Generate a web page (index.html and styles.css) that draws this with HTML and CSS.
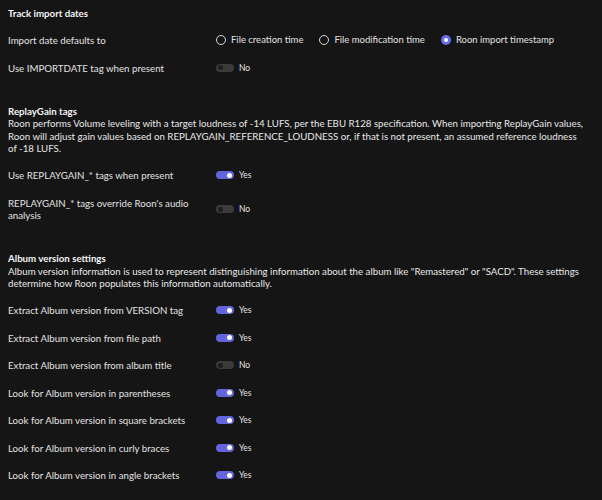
FILE: index.html
```html
<!DOCTYPE html>
<html lang="en">
<head>
    <meta charset="UTF-8">
    <meta name="viewport" content="width=device-width, initial-scale=1.0">
    <title>Import Settings</title>
    <link rel="stylesheet" href="styles.css">
</head>
<body>
    <div class="settings">
        <section class="group">
            <h2 class="group__title">Track import dates</h2>
            <div class="rows">
                <div class="row">
                    <div class="row__label">Import date defaults to</div>
                    <div class="row__control radios">
                        <label class="radio"><span class="radio__dot"></span>File creation time</label>
                        <label class="radio"><span class="radio__dot"></span>File modification time</label>
                        <label class="radio radio--on"><span class="radio__dot"></span>Roon import timestamp</label>
                    </div>
                </div>
                <div class="row">
                    <div class="row__label">Use IMPORTDATE tag when present</div>
                    <div class="row__control"><span class="toggle"></span>No</div>
                </div>
            </div>
        </section>

        <section class="group">
            <h2 class="group__title">ReplayGain tags</h2>
            <p class="group__desc">Roon performs Volume leveling with a target loudness of -14 LUFS, per the EBU R128 specification. When importing ReplayGain values, Roon will adjust gain values based on REPLAYGAIN_REFERENCE_LOUDNESS or, if that is not present, an assumed reference loudness of -18 LUFS.</p>
            <div class="rows">
                <div class="row">
                    <div class="row__label">Use REPLAYGAIN_* tags when present</div>
                    <div class="row__control"><span class="toggle toggle--on"></span>Yes</div>
                </div>
                <div class="row">
                    <div class="row__label">REPLAYGAIN_* tags override Roon's audio analysis</div>
                    <div class="row__control"><span class="toggle"></span>No</div>
                </div>
            </div>
        </section>

        <section class="group">
            <h2 class="group__title">Album version settings</h2>
            <p class="group__desc">Album version information is used to represent distinguishing information about the album like "Remastered" or "SACD". These settings determine how Roon populates this information automatically.</p>
            <div class="rows">
                <div class="row">
                    <div class="row__label">Extract Album version from VERSION tag</div>
                    <div class="row__control"><span class="toggle toggle--on"></span>Yes</div>
                </div>
                <div class="row">
                    <div class="row__label">Extract Album version from file path</div>
                    <div class="row__control"><span class="toggle toggle--on"></span>Yes</div>
                </div>
                <div class="row">
                    <div class="row__label">Extract Album version from album title</div>
                    <div class="row__control"><span class="toggle"></span>No</div>
                </div>
                <div class="row">
                    <div class="row__label">Look for Album version in parentheses</div>
                    <div class="row__control"><span class="toggle toggle--on"></span>Yes</div>
                </div>
                <div class="row">
                    <div class="row__label">Look for Album version in square brackets</div>
                    <div class="row__control"><span class="toggle toggle--on"></span>Yes</div>
                </div>
                <div class="row">
                    <div class="row__label">Look for Album version in curly braces</div>
                    <div class="row__control"><span class="toggle toggle--on"></span>Yes</div>
                </div>
                <div class="row">
                    <div class="row__label">Look for Album version in angle brackets</div>
                    <div class="row__control"><span class="toggle toggle--on"></span>Yes</div>
                </div>
            </div>
        </section>
    </div>
</body>
</html>
```

FILE: styles.css
```css
* { margin: 0; padding: 0; box-sizing: border-box; }
html, body { background: #151515; }
body {
    font: 9.7px/12.5px Lato, "Noto Sans", sans-serif;
    color: #e2e2e2;
}
.settings{
    padding: 7px 15px 0 8px;
}
.group + .group{
    margin-top: 23px;
}
.group__title{
    font-size: 9.7px;
    font-weight: bold;
    color: #f4f4f4;
    line-height: 12.5px;
}
.group__desc{
    color: #e8e8e8;
}
.rows{
    margin-top: 7px;
}
.row{
    display: flex;
    align-items: center;
    min-height: 27.5px;
    padding: 7.5px 0;
}
.row__label{
    width: 208px;
    padding-right: 14px;
    flex-shrink: 0;
}
.row__control{
    display: flex;
    align-items: center;
    font-size: 8.5px;
}
.radios{
    gap: 16px;
    font-size: 9.5px;
}
.radio{
    display: flex;
    align-items: center;
    gap: 5px;
}
.radio__dot{
    width: 10px;
    height: 10px;
    border-radius: 50%;
    border: 1.3px solid #d8d8d8;
}
.radio--on .radio__dot{
    border: none;
    background: #6a6be6;
    display: flex;
    align-items: center;
    justify-content: center;
}
.radio--on .radio__dot::after{
    content: '';
    width: 4px;
    height: 4px;
    border-radius: 50%;
    background: #fff;
}
.toggle{
    position: relative;
    width: 18px;
    height: 8px;
    border-radius: 4px;
    background: #3b3b3b;
    margin-right: 5px;
}
.toggle::after{
    content: '';
    position: absolute;
    top: 1.5px;
    left: 2px;
    width: 5px;
    height: 5px;
    border-radius: 50%;
    background: #1e1e1e;
}
.toggle--on{
    background: #6365dd;
}
.toggle--on::after{
    left: auto;
    right: 2px;
    background: #fff;
}
```
